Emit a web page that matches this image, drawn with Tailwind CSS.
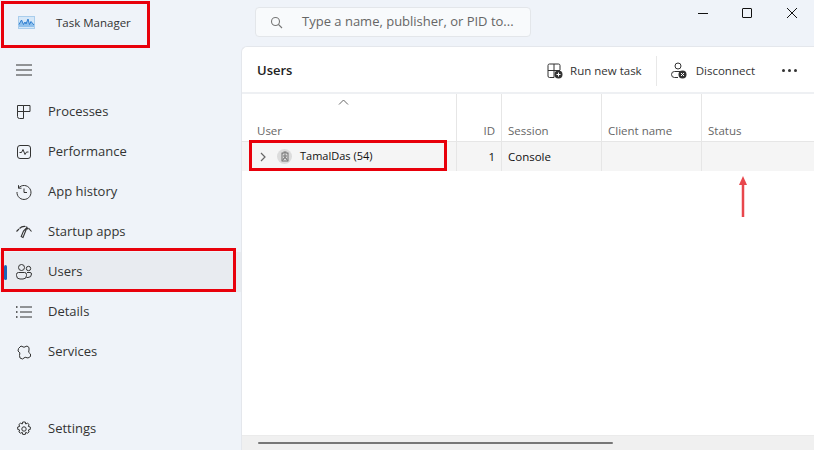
<!DOCTYPE html>
<html lang="en">
  <head>
    <meta charset="utf-8" />
    <title>Task Manager</title>
    <script src="https://cdn.jsdelivr.net/npm/@tailwindcss/browser@4"></script>
  </head>
  <body class="m-0 overflow-hidden">
    <div class="relative flex h-[450px] w-[814px] overflow-hidden bg-[#eff3f9] font-['Open_Sans','Noto_Sans',sans-serif] text-[13px] text-[#333]">

      <!-- sidebar -->
      <aside class="flex w-[241px] shrink-0 flex-col">
        <div class="flex h-[47px] items-center pb-[2px] pl-[18px]">
          <svg class="h-[13px] w-[17px]" viewBox="0 0 17 13"><rect x="0.500" y="0.500" width="16" height="12" fill="#d5e7f8" stroke="#a9cdec"/><path d="M1 11V8.500L3.500 4 5.500 8.500 7 6 8 8 10 3 11.500 8.500 13 5.500 16 9V11z" fill="#8fc0ec"/><path d="M1 8.500L3.500 4 5.500 8.500 7 6 8 8 10 3 11.500 8.500 13 5.500 16 9" fill="none" stroke="#2f7fd1"/></svg>
          <span class="ml-[21px] text-[11.500px]">Task Manager</span>
        </div>
        <div class="flex h-[45px] items-center pl-[16px] pt-[1px]">
          <svg class="h-[12px] w-[16px]" viewBox="0 0 16 12" fill="none" stroke="#333" stroke-width="1"><path d="M0 1h16M0 6h16M0 11h16"/></svg>
        </div>
        <nav class="flex flex-col">
          <a class="flex h-[40px] items-center pl-[17px]">
            <svg class="h-[14px] w-[14px]" viewBox="0 0 14 14" fill="none" stroke="#333" stroke-width="1"><path d="M.500 .500h6v6h-6zM6.500 .500h6.500v6h-6.500zM.500 6.500h6v7h-4a2 2 0 0 1-2-2z"/></svg>
            <span class="ml-[17px]">Processes</span>
          </a>
          <a class="flex h-[40px] items-center pl-[17px]">
            <svg class="h-[14px] w-[14px]" viewBox="0 0 14 14" fill="none" stroke="#333" stroke-width="1"><rect x=".500" y=".500" width="13" height="13" rx="2.500"/><path d="M2.500 7.500h2l1.500-3 2 5 1.500-2.500h2"/></svg>
            <span class="ml-[17px]">Performance</span>
          </a>
          <a class="flex h-[40px] items-center pl-[16px]">
            <svg class="h-[16px] w-[16px]" viewBox="0 0 16 16" fill="none" stroke="#333" stroke-width="1"><path d="M2.600 4A7 7 0 1 1 1 8M2.500 1.200V4.200H5.500M8 4.500V8.500H11"/></svg>
            <span class="ml-[16px]">App history</span>
          </a>
          <a class="flex h-[40px] items-center pl-[16px]">
            <svg class="h-[14px] w-[16px]" viewBox="0 0 16 14" fill="none" stroke="#333" stroke-width="1.100"><path d="M.500 6.500L3 4M3.500 3.500A7 7 0 0 1 9.500 1.500M12.500 3L15.500 6.500M10.500 1.500L12 4.500M11 2.500L7 12.500 5.200 11.500 7.500 6z"/></svg>
            <span class="ml-[16px]">Startup apps</span>
          </a>
          <a class="relative flex h-[40px] items-center bg-[#e8ebf0] pl-[16px]">
            <span class="absolute left-[4px] top-[13px] h-[15px] w-[3px] rounded-full bg-[#1a66b8]"></span>
            <svg class="h-[16px] w-[16px]" viewBox="0 0 16 16" fill="none" stroke="#333" stroke-width="1"><circle cx="5.500" cy="3.500" r="3"/><circle cx="12.500" cy="4.500" r="2.200"/><path d="M2.500 8.500h6a2 2 0 0 1 2 2v1a3.500 3.500 0 0 1-3.500 3.500H4A3.500 3.500 0 0 1 .500 11.500v-1a2 2 0 0 1 2-2zM11 8.500h3a1.500 1.500 0 0 1 1.500 1.500 3.500 3.500 0 0 1-3.500 3.500h-1.500"/></svg>
            <span class="ml-[16px]">Users</span>
          </a>
          <a class="flex h-[40px] items-center pl-[16px]">
            <svg class="h-[12px] w-[16px]" viewBox="0 0 16 12" fill="none" stroke="#333" stroke-width="1"><path d="M4 1h12M4 6h12M4 11h12"/><path d="M0 1h1.500M0 6h1.500M0 11h1.500" stroke-width="1.500"/></svg>
            <span class="ml-[16px]">Details</span>
          </a>
          <a class="flex h-[40px] items-center pl-[17px]">
            <svg class="h-[15px] w-[15px]" viewBox="0 0 15 15" fill="none" stroke="#333" stroke-width="1" stroke-linejoin="round"><path d="M4 1Q7 3.500 10 1L12 2.500V5Q10.500 7.500 13.500 9V11.500L11 13Q8 11 5.500 14L3 13 2.500 10.500Q4 7.500 1 6L1.500 3.500z"/></svg>
            <span class="ml-[16px]">Services</span>
          </a>
        </nav>
        <a class="mb-[1px] mt-auto flex h-[40px] items-center pl-[16px]">
          <svg class="h-[16px] w-[16px]" viewBox="0 0 16 16" fill="none" stroke="#333" stroke-width="1"><circle cx="8" cy="8" r="2.200"/><path d="M6.700 1h2.600l.4 2 1.800-.8 1.600 1.300-.8 1.900 2 .6v2.400l-2 .6.800 1.900-1.600 1.300-1.800-.8-.4 2H6.700l-.4-2-1.800.8-1.600-1.300.8-1.900-2-.6V6l2-.6-.8-1.900 1.600-1.300 1.800.8z"/></svg>
          <span class="ml-[16px]">Settings</span>
        </a>
      </aside>

      <!-- right side -->
      <div class="flex min-w-0 flex-1 flex-col">
        <div class="flex h-[46px] shrink-0 items-start">
          <div class="ml-[14px] mt-[7px] flex h-[30px] w-[276px] items-center rounded-[4px] border border-[#e3e6ea] bg-[#f8fafc] pl-[14px] text-[#666]">
            <svg class="h-[13px] w-[13px]" viewBox="0 0 13 13" fill="none" stroke="#777" stroke-width="1.100"><circle cx="5.500" cy="5.500" r="4"/><path d="M8.500 8.500L12 12"/></svg>
            <span class="ml-[19px] whitespace-nowrap">Type a name, publisher, or PID to...</span>
          </div>
          <div class="ml-auto mt-[8px] flex items-center gap-[35px] pr-[17px]">
            <span class="h-px w-[10px] bg-[#111]"></span>
            <span class="-ml-px h-[10px] w-[10px] rounded-[1px] border border-[#111]"></span>
            <svg class="h-[10px] w-[10px]" viewBox="0 0 10 10" stroke="#111"><path d="M0 0L10 10M10 0L0 10"/></svg>
          </div>
        </div>

        <main class="flex min-h-0 flex-1 flex-col rounded-tl-[6px] border-l border-t border-[#e4e7ec] bg-white">
          <header class="flex h-[47px] shrink-0 items-center border-b-2 border-[#eef0f3] pl-[15px] pt-[2px]">
            <span class="text-[13px] font-semibold text-[#222]">Users</span>
            <div class="ml-auto flex items-center pr-[17px] text-[11.500px]">
              <svg class="h-[16px] w-[16px]" viewBox="0 0 16 16" fill="none" stroke="#333" stroke-width="1"><path d="M7 14.500H2.500A1.500 1.500 0 0 1 1 13V2.500A1.500 1.500 0 0 1 2.500 1h9A1.500 1.500 0 0 1 13 2.500V7M1 7.500h12M7 1V14.500"/><circle cx="11.500" cy="11.500" r="4" fill="#333" stroke="none"/><path d="M11.500 9.500v4M9.500 11.500h4" stroke="#fff"/></svg>
              <span class="ml-[7px]">Run new task</span>
              <span class="ml-[14px] mr-[14px] h-[30px] w-px bg-[#e8e8e8]"></span>
              <svg class="h-[17px] w-[16px]" viewBox="0 0 16 17" fill="none" stroke="#333" stroke-width="1"><circle cx="7" cy="4" r="3"/><path d="M7 15.500H3.500a3 3 0 0 1 0-6h6"/><circle cx="11.500" cy="12.500" r="4" fill="#333" stroke="none"/><path d="M10 11l3 3M13 11l-3 3" stroke="#fff"/></svg>
              <span class="ml-[9px]">Disconnect</span>
              <div class="ml-[27px] flex gap-[3px]">
                <span class="h-[3px] w-[3px] rounded-full bg-[#333]"></span>
                <span class="h-[3px] w-[3px] rounded-full bg-[#333]"></span>
                <span class="h-[3px] w-[3px] rounded-full bg-[#333]"></span>
              </div>
            </div>
          </header>

          <div class="grid grid-cols-[215px_45px_100px_100px_1fr] text-[11.500px]">
            <div class="flex h-[48px] flex-col justify-between border-r border-b border-[#e6e6e6] pb-[2px] pl-[15px] text-[#666]">
              <svg class="ml-[81px] mt-[5px] h-[6px] w-[11px]" viewBox="0 0 11 6" fill="none" stroke="#666"><path d="M1 5.500L5.500 1 10 5.500"/></svg>
              <span>User</span>
            </div>
            <div class="flex h-[48px] items-end justify-end border-r border-b border-[#e6e6e6] pb-[2px] pr-[6px] text-[#666]">ID</div>
            <div class="flex h-[48px] items-end border-r border-b border-[#e6e6e6] pb-[2px] pl-[6px] text-[#666]">Session</div>
            <div class="flex h-[48px] items-end border-r border-b border-[#e6e6e6] pb-[2px] pl-[6px] text-[#666]">Client name</div>
            <div class="flex h-[48px] items-end border-b border-[#e6e6e6] pb-[2px] pl-[6px] text-[#666]">Status</div>

            <div class="flex h-[29px] items-center border-r border-[#e6e6e6] bg-[#f5f5f5] pl-[18px] text-[#111]">
              <svg class="h-[10px] w-[6px]" viewBox="0 0 6 10" fill="none" stroke="#666" stroke-width="1.200"><path d="M1 1l4 4-4 4"/></svg>
              <span class="ml-[11px] flex h-[15px] w-[15px] items-center justify-center rounded-full bg-[#dcdcdc]">
                <svg class="h-[11px] w-[8px]" viewBox="0 0 8 11" fill="none" stroke="#555" stroke-width="0.800"><rect x="1" y="2" width="6" height="8"/><circle cx="4" cy="5" r="1.200"/><path d="M2.500 1h3M2 9l1-2h2l1 2"/></svg>
              </span>
              <span class="ml-[8px] text-[11px]">TamalDas (54)</span>
            </div>
            <div class="flex h-[29px] items-center justify-end border-r border-[#e6e6e6] bg-[#f5f5f5] pr-[6px] text-[#111]">1</div>
            <div class="flex h-[29px] items-center border-r border-[#e6e6e6] bg-[#f5f5f5] pl-[6px] text-[#111]">Console</div>
            <div class="h-[29px] border-r border-[#e6e6e6] bg-[#f5f5f5]"></div>
            <div class="h-[29px] bg-[#f5f5f5]"></div>
          </div>

          <div class="mt-auto flex h-[15px] shrink-0 items-center border-t border-[#ebebeb] bg-[#f0f0f0] pl-[16px]">
            <span class="h-[2px] w-[355px] rounded-full bg-[#777]"></span>
          </div>
        </main>
      </div>

      <!-- red annotations drawn over the screenshot -->
      <div class="absolute left-[1px] top-[1px] h-[47px] w-[149px] border-[3px] border-[#e8000b]"></div>
      <div class="absolute left-[1px] top-[248px] h-[44px] w-[235px] border-[3px] border-[#e8000b]"></div>
      <div class="absolute left-[249px] top-[140px] h-[31px] w-[198px] border-[3px] border-[#e8000b]"></div>
      <svg class="absolute left-[736px] top-[175px] h-[44px] w-[14px]" viewBox="0 0 14 44" fill="none">
        <path d="M7 8V42" stroke="#e8474c" stroke-width="2.500"/>
        <path d="M7 1L11 10H3z" fill="#e8474c"/>
      </svg>
    </div>
  </body>
</html>
